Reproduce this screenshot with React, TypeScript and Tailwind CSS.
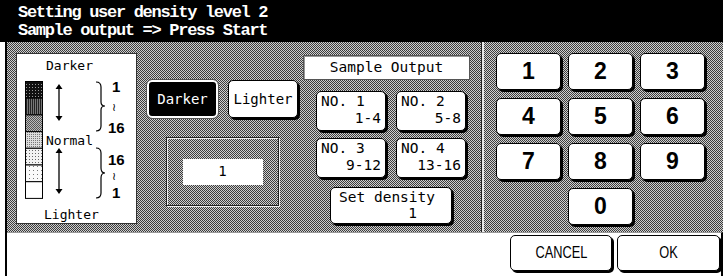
import React from "react";

const checker =
  "bg-[image:repeating-conic-gradient(#3c3c3c_0%_25%,#cfcfcf_0%_50%)] bg-[length:2px_2px]";

const mono = "font-['DejaVu_Sans_Mono','Liberation_Mono',monospace]";

const keys = ["1", "2", "3", "4", "5", "6", "7", "8", "9"];

const samples = [
  { no: "NO. 1", range: "1-4" },
  { no: "NO. 2", range: "5-8" },
  { no: "NO. 3", range: "9-12" },
  { no: "NO. 4", range: "13-16" },
];

const DensityPanel: React.FC = () => {
  const segs = ["url(#p1)", "url(#p2)", "url(#p3)", "url(#p4)", "url(#p5)", "url(#p6)", "#fff"];
  const txt = { fontFamily: "'DejaVu Sans Mono', 'Liberation Mono', monospace", fontSize: 13 };
  const num = { fontFamily: "'Liberation Sans', Arial, sans-serif", fontSize: 15, fontWeight: 700 };
  return (
    <svg width="119" height="169" viewBox="0 0 119 169">
      <defs>
        <pattern id="p1" width="3" height="3" patternUnits="userSpaceOnUse">
          <rect width="3" height="3" fill="#111" />
          <rect width="1" height="1" fill="#999" />
        </pattern>
        <pattern id="p2" width="2" height="2" patternUnits="userSpaceOnUse">
          <rect width="2" height="2" fill="#222" />
          <rect width="1" height="2" fill="#777" />
        </pattern>
        <pattern id="p3" width="2" height="2" patternUnits="userSpaceOnUse">
          <rect width="2" height="2" fill="#555" />
          <rect width="1" height="1" fill="#bbb" />
          <rect x="1" y="1" width="1" height="1" fill="#bbb" />
        </pattern>
        <pattern id="p4" width="2" height="2" patternUnits="userSpaceOnUse">
          <rect width="2" height="2" fill="#ddd" />
          <rect width="1" height="1" fill="#777" />
        </pattern>
        <pattern id="p5" width="3" height="3" patternUnits="userSpaceOnUse">
          <rect width="3" height="3" fill="#f2f2f2" />
          <rect width="1" height="1" fill="#666" />
        </pattern>
        <pattern id="p6" width="4" height="4" patternUnits="userSpaceOnUse">
          <rect width="4" height="4" fill="#fafafa" />
          <rect width="1" height="1" fill="#777" />
        </pattern>
      </defs>
      <text x="29" y="16" style={txt}>Darker</text>
      {segs.map((f, i) => (
        <rect key={i} x="8.5" y={27.5 + i * 16.7} width="17" height="16.7" fill={f} stroke="#000" strokeWidth="1" />
      ))}
      {/* arrows */}
      <line x1="42" y1="33" x2="42" y2="64" stroke="#000" strokeWidth="1.3" />
      <path d="M38.5 35 L42 30 L45.5 35 Z M38.5 62 L42 67 L45.5 62 Z" fill="#000" />
      <line x1="42" y1="97" x2="42" y2="137" stroke="#000" strokeWidth="1.3" />
      <path d="M38.5 99 L42 94 L45.5 99 Z M38.5 135 L42 140 L45.5 135 Z" fill="#000" />
      {/* braces */}
      <path d="M79 28 Q84 28 84 33 L84 48 Q84 52 88 52 Q84 52 84 56 L84 72 Q84 77 79 77" fill="none" stroke="#000" strokeWidth="1.2" />
      <path d="M79 94 Q84 94 84 99 L84 114 Q84 119 88 119 Q84 119 84 124 L84 139 Q84 144 79 144" fill="none" stroke="#000" strokeWidth="1.2" />
      <text x="95" y="38" style={num}>1</text>
      <text x="95" y="57" style={{ ...txt, fontSize: 11 }}>≀</text>
      <text x="91" y="79" style={num}>16</text>
      <text x="29" y="91" style={txt}>Normal</text>
      <text x="91" y="111" style={num}>16</text>
      <text x="95" y="126" style={{ ...txt, fontSize: 11 }}>≀</text>
      <text x="95" y="144" style={num}>1</text>
      <text x="27" y="165" style={txt}>Lighter</text>
    </svg>
  );
};

export default function App() {
  return (
    <div className="w-[723px] h-[276px] bg-white overflow-hidden flex flex-col">
      {/* header */}
      <div className="h-[42px] bg-black pl-[18px] pt-[4px] text-white">
        <div className="font-['Liberation_Mono',monospace] font-bold text-[17px] leading-[18px] tracking-[-1.3px] whitespace-pre">
          <div>Setting user density level 2</div>
          <div>Sample output =&gt; Press Start</div>
        </div>
      </div>

      <div className="flex-1 ml-[5px] border-l-2 border-black flex flex-col">
        {/* grey body */}
        <div className={`h-[190px] flex ${checker}`}>
          {/* left area */}
          <div className="w-[474px] flex items-start">
            <div className="ml-[9px] mt-[11px] bg-white border border-[#333]">
              <DensityPanel />
            </div>

            <div className="ml-[10px] mt-[38px] flex flex-col">
              <div className="flex gap-[10px]">
                <div className={`w-[71px] h-[38px] rounded-[5px] bg-black border-2 border-white outline outline-1 outline-[#555] flex items-center justify-center text-white text-[14px] ${mono}`}>
                  Darker
                </div>
                <div className={`w-[70px] h-[38px] rounded-[5px] bg-white border border-black shadow-[2px_2px_0_#000] flex items-center justify-center text-black text-[14px] ${mono}`}>
                  Lighter
                </div>
              </div>
              <div className="ml-[19px] mt-[19px] w-[113px] h-[69px] border border-[#222] shadow-[inset_1px_1px_0_#eee,1px_1px_0_#eee] flex items-center justify-center">
                <div className={`w-[80px] h-[26px] bg-white flex items-center justify-center text-[14px] text-black ${mono}`}>
                  1
                </div>
              </div>
            </div>

            <div className="ml-[5px] mt-[13px] w-[167px] flex flex-col">
              <div className={`h-[25px] bg-white border border-[#555] shadow-[inset_1px_1px_0_#999] flex items-center justify-center text-[14.5px] text-black ${mono}`}>
                Sample Output
              </div>
              <div className="ml-[13px] mt-[11px] grid grid-cols-[70px_70px] gap-x-[10px] gap-y-[7px]">
                {samples.map((s) => (
                  <div
                    key={s.no}
                    className={`h-[40px] rounded-[5px] bg-white border border-black shadow-[2px_2px_0_#000] px-[4px] pt-[1px] flex flex-col text-[14.5px] leading-[17px] text-black ${mono}`}
                  >
                    <span className="whitespace-pre">{s.no}</span>
                    <span className="self-end">{s.range}</span>
                  </div>
                ))}
              </div>
              <div className={`ml-[27px] mt-[9px] w-[122px] h-[37px] rounded-[5px] bg-white border border-black shadow-[2px_2px_0_#000] px-[8px] pt-[1px] flex flex-col text-[14.5px] leading-[16px] text-black ${mono}`}>
                <span>Set density</span>
                <span className="self-end pr-[26px]">1</span>
              </div>
            </div>
          </div>

          {/* divider */}
          <div className="w-[3px] border-l border-[#222] bg-[#e8e8e8]" />

          {/* keypad */}
          <div className="flex-1 pl-[12px] pt-[11px]">
            <div className="grid grid-cols-[65px_65px_65px] gap-x-[7px] gap-y-[8px]">
              {keys.map((k) => (
                <div
                  key={k}
                  className="h-[37px] rounded-[5px] bg-white border border-black shadow-[2px_2px_0_#000] flex items-center justify-center font-['Liberation_Sans',Arial,sans-serif] font-bold text-[23px] text-black"
                >
                  {k}
                </div>
              ))}
              <div />
              <div className="h-[37px] rounded-[5px] bg-white border border-black shadow-[2px_2px_0_#000] flex items-center justify-center font-['Liberation_Sans',Arial,sans-serif] font-bold text-[23px] text-black">
                0
              </div>
            </div>
          </div>
        </div>

        {/* bottom strip */}
        <div className="flex-1 border-t border-[#999] border-r-2 border-r-black flex justify-end items-start pt-[2px] pr-[1px] gap-[5px]">
          <div className="w-[102px] h-[36px] rounded-[5px] bg-white border border-black shadow-[2px_2px_0_#000] flex items-center justify-center font-['Liberation_Sans',Arial,sans-serif] text-[16px] text-black">
            <span className="inline-block scale-x-[0.8]">CANCEL</span>
          </div>
          <div className="w-[103px] h-[36px] rounded-[5px] bg-white border border-black shadow-[2px_2px_0_#000] flex items-center justify-center font-['Liberation_Sans',Arial,sans-serif] text-[16px] text-black">
            <span className="inline-block scale-x-[0.8]">OK</span>
          </div>
        </div>
      </div>
    </div>
  );
}
